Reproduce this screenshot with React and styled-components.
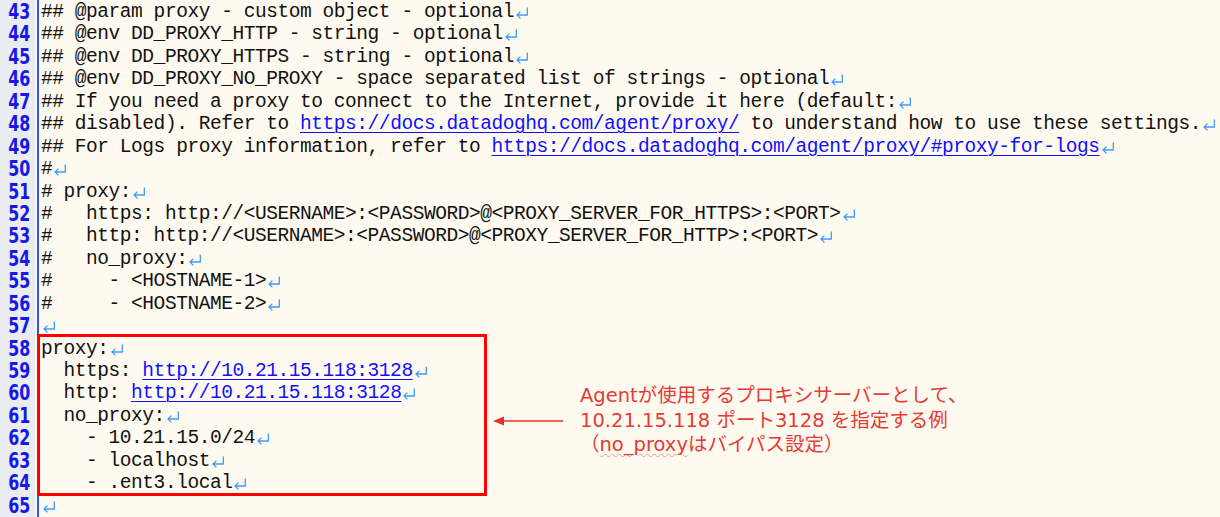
import styled, { createGlobalStyle } from "styled-components";

const GlobalStyle = createGlobalStyle`
  html, body {
    margin: 0;
    padding: 0;
    background: #fffaf0;
  }
`;

const ROW = "22.45px";

const Editor = styled.div`
  position: relative;
  display: flex;
  width: 1220px;
  height: 517px;
  overflow: hidden;
  background: #fffaf0;
`;

const Gutter = styled.div`
  flex: none;
  width: 35px;
  padding-top: 1px;
  background: #e9ecf1;
  box-shadow: 1px 0 0 #f7f8fb;
`;

const LineNo = styled.div`
  height: ${ROW};
  line-height: ${ROW};
  padding-right: 6px;
  text-align: right;
  font-family: "DejaVu Sans Condensed", "Liberation Sans", sans-serif;
  font-weight: bold;
  font-size: 22px;
  color: #1717e6;
  transform: scaleX(0.8);
  transform-origin: right center;
`;

const Code = styled.div`
  flex: 1;
  margin-left: 2px;
  padding-top: 1px;
  padding-left: 2px;
  border-left: 2px solid #2a55f0;
`;

const Line = styled.div`
  height: ${ROW};
  line-height: ${ROW};
  white-space: pre;
  font-family: "Liberation Mono", "DejaVu Sans Mono", monospace;
  font-size: 19.5px;
  letter-spacing: -0.44px;
  color: #111;
`;

const Url = styled.span`
  color: #1010ff;
  text-decoration: underline;
  text-decoration-thickness: 1px;
  text-underline-offset: 3px;
`;

const Mark = styled.svg`
  display: inline-block;
  width: 14px;
  height: 12px;
  margin-left: 1px;
  vertical-align: -2px;
`;

const ReturnMark = () => (
  <Mark viewBox="0 0 14 12">
    <path
      d="M12.3 0.5 V8 H2 M5.4 4.6 L2 8 L5.4 11.4"
      fill="none"
      stroke="#3d9bff"
      strokeWidth="1.3"
    />
  </Mark>
);

const Highlight = styled.div`
  position: absolute;
  left: 37px;
  top: 334px;
  width: 444px;
  height: 156px;
  border: 3px solid #ff0000;
  pointer-events: none;
`;

const Note = styled.div`
  position: absolute;
  left: 493px;
  top: 384px;
  display: flex;
  align-items: center;
  gap: 17px;
`;

const NoteText = styled.div`
  font-family: "DejaVu Sans", "Noto Sans CJK JP", sans-serif;
  font-size: 19.5px;
  line-height: 24.5px;
  color: #e53a35;
  white-space: pre;
`;

const Squiggle = styled.span`
  text-decoration: underline wavy #f19b9b;
  text-decoration-thickness: 1px;
  text-underline-offset: 2px;
`;

const lines = [
  ["## @param proxy - custom object - optional"],
  ["## @env DD_PROXY_HTTP - string - optional"],
  ["## @env DD_PROXY_HTTPS - string - optional"],
  ["## @env DD_PROXY_NO_PROXY - space separated list of strings - optional"],
  ["## If you need a proxy to connect to the Internet, provide it here (default:"],
  [
    "## disabled). Refer to ",
    { url: "https://docs.datadoghq.com/agent/proxy/" },
    " to understand how to use these settings.",
  ],
  [
    "## For Logs proxy information, refer to ",
    { url: "https://docs.datadoghq.com/agent/proxy/#proxy-for-logs" },
  ],
  ["#"],
  ["# proxy:"],
  ["#   https: http://<USERNAME>:<PASSWORD>@<PROXY_SERVER_FOR_HTTPS>:<PORT>"],
  ["#   http: http://<USERNAME>:<PASSWORD>@<PROXY_SERVER_FOR_HTTP>:<PORT>"],
  ["#   no_proxy:"],
  ["#     - <HOSTNAME-1>"],
  ["#     - <HOSTNAME-2>"],
  [""],
  ["proxy:"],
  ["  https: ", { url: "http://10.21.15.118:3128" }],
  ["  http: ", { url: "http://10.21.15.118:3128" }],
  ["  no_proxy:"],
  ["    - 10.21.15.0/24"],
  ["    - localhost"],
  ["    - .ent3.local"],
  [""],
];

const FIRST = 43;

const App = () => (
  <>
    <GlobalStyle />
    <Editor>
      <Gutter>
        {lines.map((_, i) => (
          <LineNo key={i}>{FIRST + i}</LineNo>
        ))}
      </Gutter>
      <Code>
        {lines.map((parts, i) => (
          <Line key={i}>
            {parts.map((p, j) =>
              typeof p === "string" ? p : <Url key={j}>{p.url}</Url>
            )}
            <ReturnMark />
          </Line>
        ))}
      </Code>
      <Highlight />
      <Note>
        <svg width="70" height="12" viewBox="0 0 70 12">
          <path d="M10 6 H70" stroke="#e0342c" strokeWidth="1.5" />
          <path d="M0 6 L11 1.5 L11 10.5 Z" fill="#e0342c" />
        </svg>
        <NoteText>
          {"Agentが使用するプロキシサーバーとして、\n10.21.15.118 ポート3128 を指定する例\n（"}
          <Squiggle>no_proxy</Squiggle>
          {"はバイパス設定）"}
        </NoteText>
      </Note>
    </Editor>
  </>
);

export default App;
